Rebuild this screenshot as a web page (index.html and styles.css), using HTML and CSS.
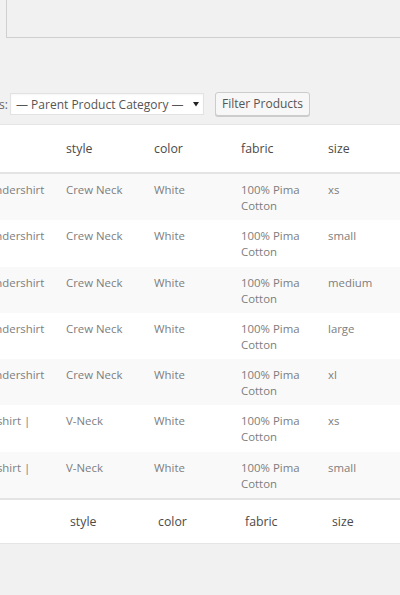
FILE: index.html
```html
<!DOCTYPE html>
<html lang="en">
<head>
<meta charset="utf-8">
<title>Products</title>
<link rel="stylesheet" href="styles.css">
</head>
<body>
<div class="page">
  <div class="tabs"><div class="tab-panel"></div></div>

  <div class="filters">
    <label class="filter-label"><span>Product Categories:</span></label>
    <div class="select">
      <span>— Parent Product Category —</span>
      <svg class="arrow" width="6" height="6" viewBox="0 0 6 6"><path d="M0 1h6L3 5.5z" fill="#222"/></svg>
    </div>
    <button class="button">Filter Products</button>
  </div>

  <div class="table-wrap">
    <table class="products">
      <colgroup>
        <col class="c-name"><col class="c-style"><col class="c-color"><col class="c-fabric"><col class="c-size">
      </colgroup>
      <thead>
        <tr><th></th><th>style</th><th>color</th><th>fabric</th><th>size</th></tr>
      </thead>
      <tbody>
        <tr><td class="name">Undershirt</td><td>Crew Neck</td><td>White</td><td>100% Pima Cotton</td><td>xs</td></tr>
        <tr><td class="name">Undershirt</td><td>Crew Neck</td><td>White</td><td>100% Pima Cotton</td><td>small</td></tr>
        <tr><td class="name">Undershirt</td><td>Crew Neck</td><td>White</td><td>100% Pima Cotton</td><td>medium</td></tr>
        <tr><td class="name">Undershirt</td><td>Crew Neck</td><td>White</td><td>100% Pima Cotton</td><td>large</td></tr>
        <tr><td class="name">Undershirt</td><td>Crew Neck</td><td>White</td><td>100% Pima Cotton</td><td>xl</td></tr>
        <tr><td class="name">T-shirt |</td><td>V-Neck</td><td>White</td><td>100% Pima Cotton</td><td>xs</td></tr>
        <tr><td class="name">T-shirt |</td><td>V-Neck</td><td>White</td><td>100% Pima Cotton</td><td>small</td></tr>
      </tbody>
      <tfoot>
        <tr><th></th><th>style</th><th>color</th><th>fabric</th><th>size</th></tr>
      </tfoot>
    </table>
  </div>
</div>
</body>
</html>
```

FILE: styles.css
```css
html, body {
  margin: 0;
  padding: 0;
}

body {
  background: #f1f1f1;
  font-family: "Open Sans", "Liberation Sans", sans-serif;
  color: #555;
  overflow: hidden;
  width: 400px;
  height: 595px;
}

.page {
  width: 400px;
}

.tabs {
  height: 38px;
  padding-left: 6px;
  box-sizing: border-box;
}

.tab-panel {
  height: 38px;
  box-sizing: border-box;
  border-left: 1px solid #cfcfcf;
  border-bottom: 1px solid #cfcfcf;
}

.filters {
  display: flex;
  align-items: center;
  height: 24px;
  margin-top: 54px;
}

.filter-label {
  width: 8px;
  display: flex;
  justify-content: flex-end;
  overflow: hidden;
  white-space: nowrap;
  font-size: 12px;
  color: #666;
  margin-right: 2px;
}

.select {
  width: 194px;
  height: 22px;
  box-sizing: border-box;
  border: 1px solid #e2e2e2;
  background: #fff;
  padding: 0 4px 0 5px;
  display: flex;
  align-items: center;
  justify-content: space-between;
  font-size: 12px;
  color: #555;
  white-space: nowrap;
  box-shadow: inset 0 1px 2px rgba(0,0,0,0.04);
}

.arrow {
  flex: none;
}

.button {
  margin-left: 11px;
  height: 24px;
  padding: 0 6px;
  border: 1px solid #cccccc;
  border-radius: 3px;
  background: #f7f7f7;
  box-shadow: 0 1px 0 #cccccc;
  font-family: "Open Sans", "Liberation Sans", sans-serif;
  font-size: 12px;
  color: #555;
  line-height: 22px;
}

.table-wrap {
  margin-top: 8px;
  margin-left: -23px;
  width: 470px;
}

.products {
  width: 470px;
  table-layout: fixed;
  border-collapse: separate;
  border-spacing: 0;
  background: #fff;
  border-top: 1px solid #e5e5e5;
  border-bottom: 1px solid #e5e5e5;
}

.c-name { width: 79px; }
.c-style { width: 88px; }
.c-color { width: 87px; }
.c-fabric { width: 87px; }

.products th {
  text-align: left;
  font-weight: 400;
  font-size: 12.3px;
  color: #4a4a4a;
  padding: 0 10px;
}

.products thead th {
  height: 47px;
  border-bottom: 2px solid #e4e4e4;
  vertical-align: middle;
}

.products tfoot th {
  height: 43px;
  border-top: 2px solid #e4e4e4;
  padding-left: 14px;
  vertical-align: middle;
}

.products td {
  font-size: 11.4px;
  line-height: 16px;
  color: #7d7d7d;
  padding: 8px 10px 6.3px;
  vertical-align: top;
}

.products td.name {
  white-space: nowrap;
  overflow: hidden;
}

.products tbody tr:nth-child(odd) {
  background: #f9f9f9;
}
```
